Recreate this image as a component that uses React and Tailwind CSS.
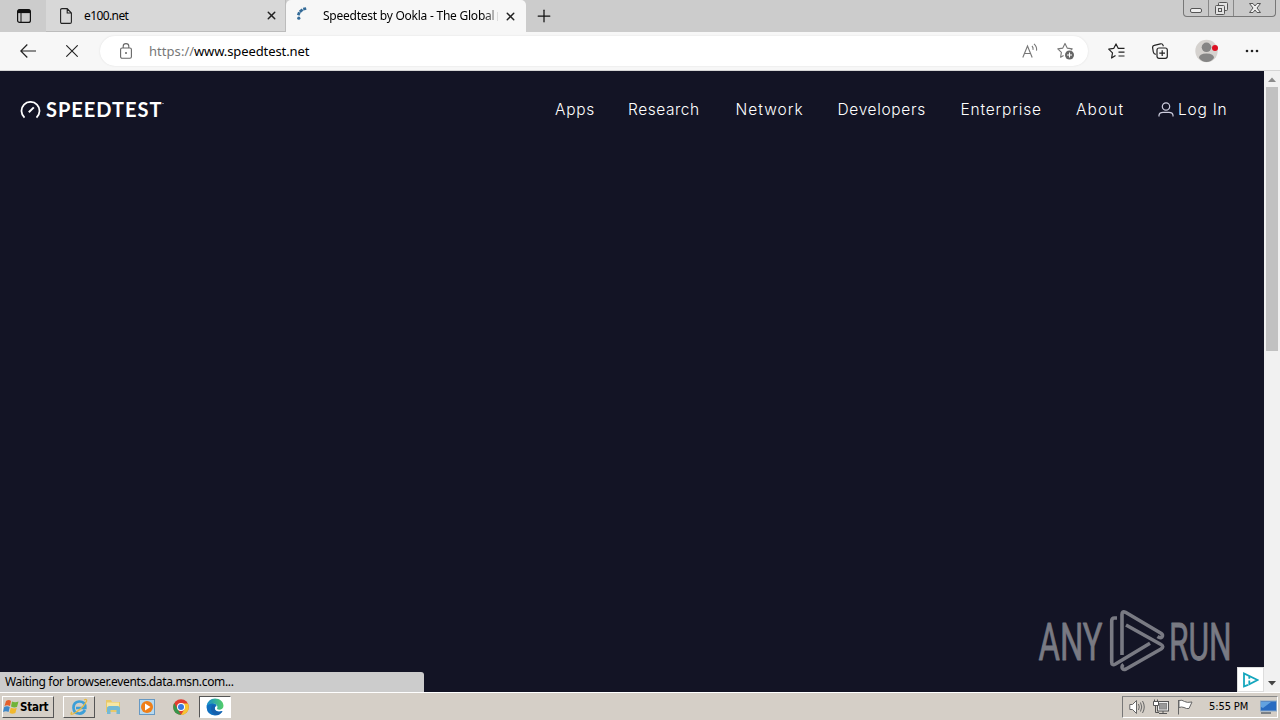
import { X, Plus } from "lucide-react";

const NAV = [
  { label: "Apps", cls: "w-[73px] tracking-[0.7px]" },
  { label: "Research", cls: "w-[107.5px] tracking-[0.55px]" },
  { label: "Network", cls: "w-[102px] tracking-[1px]" },
  { label: "Developers", cls: "w-[123px] tracking-[0.65px]" },
  { label: "Enterprise", cls: "w-[115.5px] tracking-[0.8px]" },
  { label: "About", cls: "w-[82px] tracking-[1.1px]" },
];

function PageIcon() {
  return (
    <svg width="12" height="16" viewBox="0 0 12 16" fill="none" stroke="#222" strokeWidth="1.1">
      <path d="M.6 2Q.6.6 2 .6H7.2L11.4 5V14Q11.4 15.4 10 15.4H2Q.6 15.4.6 14ZM7.2.8V5H11.2" />
    </svg>
  );
}

function TabStrip() {
  return (
    <div className="flex h-8 shrink-0 bg-[#cccccc]">
      <div className="flex w-[46px] items-center justify-center pl-[2px]">
        <svg width="14" height="14" viewBox="0 0 14 14" fill="none" stroke="#111">
          <rect x=".6" y=".6" width="12.8" height="12.8" rx="2" strokeWidth="1.2" />
          <path d="M1 2.4H13" strokeWidth="3.4" />
          <path d="M4 4V13" />
        </svg>
      </div>
      <div className="flex w-[240px] items-center border-b border-r border-[#bcbcbc] bg-[#d8d8d8] pl-[14px]">
        <PageIcon />
        <span className="ml-3 w-[181px] pt-px text-[12px] tracking-[-0.6px] text-black">e100.net</span>
        <X size={13} strokeWidth={2.7} color="#222" />
      </div>
      <div className="flex w-[240px] items-center rounded-t-[5px] bg-[#f7f7f7] pl-[10px]">
        <svg className="mb-1" width="13" height="14" viewBox="0 0 13 14" fill="#346b98" stroke="#346b98" strokeWidth="2.8">
          <path d="M10.2 1.5 7.2 2.2" />
          <path d="M6.6 2.5 3.8 4.8" />
          <path d="M3.4 5.3 2.2 8.2" />
          <circle cx="2.8" cy="11.2" r="1.6" stroke="none" />
        </svg>
        <span className="ml-[14px] w-[174px] whitespace-nowrap text-[12px] tracking-[-0.24px] text-black [mask-image:linear-gradient(to_right,black_92%,rgba(0,0,0,0.35))]">
          Speedtest by Ookla - The Global
        </span>
        <span className="h-[9px] w-px bg-[#dcdcdc]" />
        <X size={13} strokeWidth={2.7} color="#222" className="ml-[6px]" />
      </div>
      <div className="flex w-[35px] items-center justify-center">
        <Plus size={20} strokeWidth={1.5} color="#111" />
      </div>
      <div className="ml-auto mr-1 flex h-[17px] w-[93px] rounded-b-[4px] border border-t-0 border-[#777] bg-[#c9c9c9]">
        <div className="flex w-[25px] items-center justify-center border-r border-[#888] pt-1">
          <svg width="12" height="5" viewBox="0 0 12 5"><rect x=".5" y=".5" width="11" height="4" rx="1.5" fill="#eee" stroke="#555" /></svg>
        </div>
        <div className="flex w-[25px] items-center justify-center border-r border-[#888]">
          <svg width="13" height="13" viewBox="0 0 13 13" fill="#e2e2e2" stroke="#555">
            <rect x="3.5" y=".5" width="9" height="8" rx="1" />
            <rect x=".5" y="3.5" width="9" height="9" rx="1" />
            <rect x="3.5" y="6.5" width="3" height="3" />
          </svg>
        </div>
        <div className="flex flex-1 items-center justify-center">
          <svg width="12" height="10" viewBox="0 0 12 10">
            <path d="M.5.5H4L6 3 8 .5H11.5L8 5 11.5 9.5H8L6 7 4 9.5H.5L4 5Z" fill="#eee" stroke="#555" />
          </svg>
        </div>
      </div>
    </div>
  );
}

function Toolbar() {
  return (
    <div className="flex h-[39px] shrink-0 items-center border-b border-[#d5d5d5] bg-[#f7f7f7]">
      <svg className="ml-5" width="16" height="14" viewBox="0 0 16 14" fill="none" stroke="#222" strokeWidth="1.2">
        <path d="M16 7H1M7.3.5.8 7 7.3 13.5" />
      </svg>
      <svg className="ml-[30px]" width="12" height="12" viewBox="0 0 12 12" stroke="#222" strokeWidth="1.1">
        <path d="M.3.3 11.7 11.7M11.7.3.3 11.7" />
      </svg>
      <div className="ml-[22px] flex h-[30px] w-[988px] items-center rounded-full bg-white shadow-[0_0_2px_#ddd]">
        <svg className="ml-5" width="12" height="16" viewBox="0 0 12 16" fill="none" stroke="#666" strokeWidth="1.1">
          <rect x=".6" y="5" width="10.8" height="10.2" rx="1.5" />
          <path d="M3.2 5V3.2Q3.2.6 6 .6T8.8 3.2V5" />
          <circle cx="6" cy="10" r="1" fill="#666" stroke="none" />
        </svg>
        <div className="ml-[17px] flex whitespace-nowrap pt-[2px] text-[13px]">
          <span className="w-[45px] tracking-[0.05px] text-[#777]">https://</span>
          <span className="tracking-[-0.1px] text-black">www.speedtest.net</span>
        </div>
        <svg className="ml-auto mr-[18px]" width="17" height="16" viewBox="0 0 17 16" fill="none" stroke="#777" strokeWidth="1.1">
          <path d="M.8 14.5 5.5 3 10.2 14.5M2.5 10.5H8.5M10 3Q11.5 4.6 11 6.8M12 .8Q15.3 4 14.5 7.6" />
        </svg>
        <svg className="mr-[13px]" width="18" height="18" viewBox="0 0 18 18" fill="none" stroke="#777" strokeWidth="1.1">
          <path d="M6.6 13.5 3.6 15.2 4.4 10.3.8 6.9 5.8 6.1 8 1.4 10.2 6.1 15.2 6.9 14 8.2" strokeLinejoin="round" />
          <circle cx="12.5" cy="13" r="4.5" fill="#666" stroke="none" />
          <path d="M12.5 10.5V15.5M10 13H15" stroke="white" />
        </svg>
      </div>
      <svg className="ml-5" width="17" height="16" viewBox="0 0 17 16" fill="none" stroke="#222" strokeWidth="1.2">
        <path d="M7.5 12.5 3.6 15 4.5 9.9.7 6.1 5.7 5.4 8 .9 10.3 5.4H16.5M10.5 9.2H16.5M10.5 13H16.5" strokeLinejoin="round" />
      </svg>
      <svg className="ml-[27px]" width="16" height="16" viewBox="0 0 16 16" fill="none" stroke="#222" strokeWidth="1.2">
        <path d="M3.8 11.4Q1.7 11 1.3 9L.6 4.7Q.4 2.8 2.2 2.4L8.5.8Q10.6.4 11.2 2.6V3.3" />
        <rect x="5" y="5" width="10.3" height="10.3" rx="2" />
        <path d="M10.2 7.2V13M7.3 10.1H13" />
      </svg>
      <svg className="ml-[27px]" width="24" height="24" viewBox="0 0 24 24">
        <circle cx="11.5" cy="12" r="11.2" fill="#d5d2cf" />
        <circle cx="11.5" cy="8.3" r="4.8" fill="#858585" />
        <path d="M4 19Q4 14.5 11.5 14.5T19 19Q16 23 11.5 23T4 19" fill="#858585" />
        <circle cx="20" cy="9" r="3" fill="#dd1022" />
      </svg>
      <svg className="ml-[26px]" width="14" height="4" viewBox="0 0 14 4" fill="#222">
        <circle cx="2" cy="2" r="1.3" /><circle cx="7" cy="2" r="1.3" /><circle cx="12" cy="2" r="1.3" />
      </svg>
    </div>
  );
}

function SiteHeader() {
  return (
    <div className="flex h-[77px] items-center pl-5 text-white">
      <svg width="21" height="18" viewBox="0 0 21 18" fill="none" stroke="white" strokeWidth="1.8">
        <path d="M4.5 16.6A9 9 0 1 1 16.5 16.6" />
        <path d="M8.8 11.2 13.8 6.4" strokeWidth="2" />
      </svg>
      <span className="ml-[5px] w-[116px] whitespace-nowrap pb-[2px] font-['Lato'] text-[20px] font-bold leading-none tracking-[1px]">
        SPEEDTEST
      </span>
      <span className="mb-3 h-px w-[2px] bg-[#77788a]" />
      <div className="ml-[391px] flex font-['Inter'] text-[15.5px] font-light">
        {NAV.map(n => <span key={n.label} className={n.cls}>{n.label}</span>)}
      </div>
      <svg width="16" height="15" viewBox="0 0 16 15" fill="none" stroke="#ccd" strokeWidth="1.2">
        <circle cx="8" cy="4.5" r="3.7" />
        <path d="M1 14.5V13Q1.5 10.3 5 10.3H11Q14.5 10.3 15 13V14.5" />
      </svg>
      <span className="ml-1 whitespace-nowrap font-['Inter'] text-[15.5px] font-light tracking-[0.75px]">Log In</span>
    </div>
  );
}

function Watermark() {
  return (
    <svg className="absolute left-[1036px] top-[538px]" width="200" height="64" viewBox="0 0 200 64" fill="none" stroke="#797a83" strokeWidth="3.6" strokeLinejoin="round">
      <g fill="#797a83" strokeWidth=".8" fontFamily="Roboto, sans-serif" fontSize="51">
        <text transform="translate(2.5 50.5) scale(.64 1)" textLength="100" lengthAdjust="spacingAndGlyphs">ANY</text>
        <text transform="translate(133 50.5) scale(.64 1)" textLength="98" lengthAdjust="spacingAndGlyphs">RUN</text>
      </g>
      <path d="M81 9H78.5Q75.7 9 75.7 12V53Q75.7 57 79.5 55L114 34.3" />
      <path d="M86 46V5.5Q86 1.5 89.5 3.3L125 24.3Q127.5 26 126 28Q124.5 29.5 121.5 27.5" />
      <path d="M90 16 125 35.5Q128.5 37.5 125 40L90 60Q86 61.5 86 58Q86 56.5 87.5 55.5" />
    </svg>
  );
}

function Scrollbar() {
  return (
    <div className="flex w-4 flex-col items-center bg-[#f1f1f1]">
      <svg width="16" height="16" viewBox="0 0 16 16"><path d="M4 11H12L8 6.5Z" fill="#8c8c8c" /></svg>
      <div className="h-[264px] w-3 bg-[#c1c1c1]" />
      <svg className="mt-auto mb-[1px]" width="16" height="16" viewBox="0 0 16 16"><path d="M4 6H12L8 10.5Z" fill="#444" /></svg>
    </div>
  );
}

function EdgeIcon() {
  return (
    <svg width="18" height="18" viewBox="0 0 18 18">
      <defs>
        <linearGradient id="edge" x1="0" y1="0" x2="1" y2="0">
          <stop stopColor="#168bd1" /><stop offset="1" stopColor="#54cf67" />
        </linearGradient>
      </defs>
      <path d="M.5 9Q1 4 7 5 11 6 10.5 8 8.5 8.5 8.8 11 10 14.5 16.5 13 14 17.5 9 17.5 1 17 .5 9" fill="#0f6fc0" />
      <path d="M6 7Q3.5 12.5 7.5 16 10 17.8 13 16.4 16 15 16.5 13 12 15 9.3 12.5 7.6 10.5 9 8.3 8 6.6 6 7" fill="#1560ad" />
      <path d="M.6 8Q2 .5 9 .5C14 .5 17.5 4 17.5 7.8S13 12.5 11 11Q12.5 7.5 9 5.8 4 4.5 .6 8" fill="url(#edge)" />
    </svg>
  );
}

function Taskbar() {
  return (
    <div className="flex h-[27px] shrink-0 items-center pt-[1px] bg-[#d5cfc7] font-['DejaVu_Sans_Condensed','DejaVu_Sans',sans-serif]">
      <div className="ml-[2px] flex h-[22px] w-[52px] items-center border border-b-[#555] border-l-white border-r-[#555] border-t-white">
        <svg className="shrink-0" width="17" height="16" viewBox="0 0 17 16">
          <path d="M3 2Q6 0 8 2L7 7Q4 5.5 1.5 7Z" fill="#e4602b" />
          <path d="M9 2.5Q12 4 15.5 2.5L14 8Q11 9 8 7.5Z" fill="#71b43b" />
          <path d="M1.2 8Q4 6.5 6.8 8L5.5 13Q3 11.5 0 13Z" fill="#3d87c8" />
          <path d="M7.8 8.7Q11 10 13.7 9L12.4 14Q9 15.5 6.5 13.7Z" fill="#f2b82d" />
        </svg>
        <span className="pt-px text-[11.5px] font-bold tracking-[-0.25px]">Start</span>
      </div>
      <div className="ml-[9px] flex h-[22px] w-8 items-center justify-center border border-b-[#555] border-l-white border-r-[#555] border-t-white">
        <svg width="18" height="18" viewBox="0 0 18 18" fill="none">
          <path d="M15 12Q12.8 16 8.7 15.5 3.8 15 3.5 9.8 3.5 4 9 3.5 15.5 3.3 15.3 10H6" stroke="#3d9fd8" strokeWidth="2.7" />
          <path d="M2 14Q-.5 17 3 16C8 14 15 7 16.6 3Q17 .5 14 2" stroke="#e5b942" strokeWidth="1.3" />
        </svg>
      </div>
      <svg className="ml-[10px]" width="16" height="16" viewBox="0 0 16 16">
        <path d="M1 1H6L7 3H15V13H1Z" fill="#e9c969" />
        <path d="M2 3.5H14V8H2Z" fill="#f7e7a4" />
        <path d="M2 15V9.5Q2 7 4.5 7H12.5Q15 7 15 9.5V15H11.5V11H5.5V15Z" fill="#73b9d5" />
      </svg>
      <svg className="ml-[18px]" width="16" height="16" viewBox="0 0 16 16">
        <rect x=".5" y=".5" width="15" height="15" fill="#b7d9ef" stroke="#6799c3" />
        <circle cx="8" cy="8" r="6" fill="#ef7f18" /><path d="M6 4.5 11.5 8 6 11.5Z" fill="white" />
      </svg>
      <svg className="ml-[18px]" width="16" height="16" viewBox="0 0 16 16">
        <circle cx="8" cy="8" r="7.8" fill="#e13d30" />
        <path d="M1.2 4.1 8 16A8 8 0 0 1 1.2 4.1" fill="#35964b" />
        <path d="M15 4.5H8L11.5 10 8 16A8 8 0 0 0 15 4.5" fill="#f6c632" />
        <circle cx="8" cy="8" r="4" fill="white" /><circle cx="8" cy="8" r="3" fill="#3879e0" />
      </svg>
      <div className="ml-[10px] flex h-[22px] w-8 items-center justify-center border border-b-white border-l-[#555] border-r-white border-t-[#555] bg-white">
        <EdgeIcon />
      </div>
      <div className="ml-auto mr-[2px] flex h-[22px] w-[156px] items-center border border-b-white border-l-[#777] border-r-white border-t-[#888] pl-[6px]">
        <svg width="17" height="16" viewBox="0 0 17 16" fill="none" stroke="#666">
          <path d="M.8 5.5H3.5L7.5 1.5V14.5L3.5 10.5H.8Z" fill="white" /><path d="M9.5 5Q11 8 9.5 11M11.5 3.5Q14 8 11.5 12.5M13.5 2Q17 8 13.5 14" />
        </svg>
        <svg className="ml-[7px]" width="16" height="16" viewBox="0 0 16 16" stroke="#555">
          <rect x="4.5" y="2.5" width="11" height="9.5" fill="#eee" />
          <rect x="6.5" y="4.5" width="7" height="5.5" fill="#999" stroke="#888" />
          <path d="M6 14.5H14M10 12V14.5M2.5 7V13.5H6" fill="none" />
          <path d="M.5 2.5H5.5V6.5H.5ZM1.5.5V2.5M4.5.5V2.5" fill="white" />
        </svg>
        <svg className="ml-[8px]" width="16" height="16" viewBox="0 0 16 16" fill="white" stroke="#666">
          <path d="M1.5 1V15.5M2 1.5Q5 .5 7.5 2.5 10 4 15 3L12 9.5Q9.5 10 7 8.5 4.5 7.5 2 8.5Z" />
        </svg>
        <span className="ml-[16px] w-[51px] whitespace-nowrap pt-px text-[11px] tracking-[-0.1px] text-black">5:55 PM</span>
        <svg width="17" height="14" viewBox="0 0 17 14">
          <rect x=".5" y="1" width="16" height="10" fill="#286bc1" stroke="#8aa9c8" /><path d="M1 2H11L3 8 1 7Z" fill="#62a2e0" /><path d="M1 13H11" stroke="#234" />
        </svg>
      </div>
    </div>
  );
}

export default function App() {
  return (
    <div className="flex h-[720px] w-[1280px] flex-col overflow-hidden bg-[#d5cfc7] font-['Noto_Sans','Open_Sans',sans-serif]">
      <TabStrip />
      <Toolbar />
      <div className="relative flex h-[621px] shrink-0">
        <div className="w-[1264px] bg-[#131425]">
          <SiteHeader />
        </div>
        <Scrollbar />
        <Watermark />
        <div className="absolute bottom-0 left-0 flex h-5 w-[424px] items-center rounded-tr-[3px] bg-[#cccccc] pl-[5px] text-[12px] tracking-[-0.34px] text-black">
          Waiting for browser.events.data.msn.com...
        </div>
        <div className="absolute bottom-0 left-[1237px] flex h-[25px] w-[27px] items-center justify-center border border-[#ddd] bg-white">
          <svg width="16" height="16" viewBox="0 0 16 16" fill="none" stroke="#14a6bd" strokeWidth="1.8">
            <path d="M5 12.8 1 14.5V1.5L14.5 8 6.3 12.3V8.5M6.3 4.8V6.8" />
          </svg>
        </div>
      </div>
      <div className="h-[1px] shrink-0 bg-white" />
      <Taskbar />
    </div>
  );
}
